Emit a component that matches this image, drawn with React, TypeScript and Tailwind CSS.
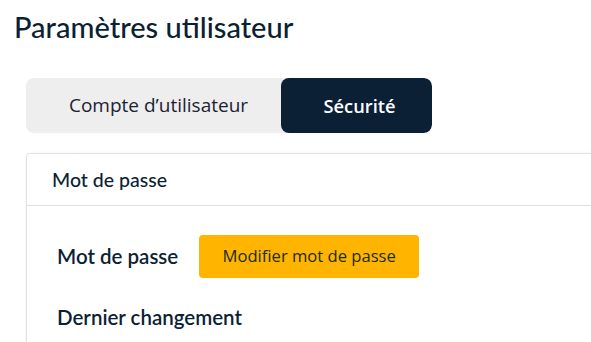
import React from "react";

export default function App() {
  return (
    <div className="w-[591px] h-[342px] overflow-hidden bg-white text-[#0b1f35]" style={{ fontFamily: "Lato, 'Noto Sans', sans-serif" }}>
      <h1 className="pl-[14px] pt-[9px] text-[29px] leading-[36px] font-medium">Paramètres utilisateur</h1>
      <div className="ml-[26px] mt-[33px] flex h-[55px] w-[406px] rounded-[8px] bg-[#eeeeee] overflow-hidden">
        <div className="flex w-[255px] items-center justify-center pl-[10px] text-[19px] text-[#1b2333]" style={{ fontFamily: "'Open Sans', sans-serif" }}>
          Compte d’utilisateur
        </div>
        <div className="flex flex-1 items-center justify-center rounded-[8px] bg-[#0b1f35] pl-[6px] text-[18.3px] font-semibold text-white" style={{ fontFamily: "'Open Sans', sans-serif" }}>
          Sécurité
        </div>
      </div>
      <div className="ml-[26px] mt-[20px] h-[240px] w-[620px] rounded-[4px] border border-[#e2e2e2] shadow-[0_0_3px_rgba(0,0,0,0.06)]">
        <div className="flex h-[52px] items-center border-b border-[#dddddd] pl-[25px] text-[19.5px] font-medium">
          Mot de passe
        </div>
        <div className="pl-[30px] pt-[29px]">
          <div className="flex items-center gap-[21px]">
            <span className="text-[20.5px] font-semibold">Mot de passe</span>
            <button className="h-[43px] w-[220px] rounded-[4px] bg-[#ffb400] text-[16.6px] text-[#1b2b22]" style={{ fontFamily: "'Open Sans', sans-serif" }}>
              Modifier mot de passe
            </button>
          </div>
          <div className="mt-[24px] text-[20.5px] font-semibold">Dernier changement</div>
        </div>
      </div>
    </div>
  );
}
